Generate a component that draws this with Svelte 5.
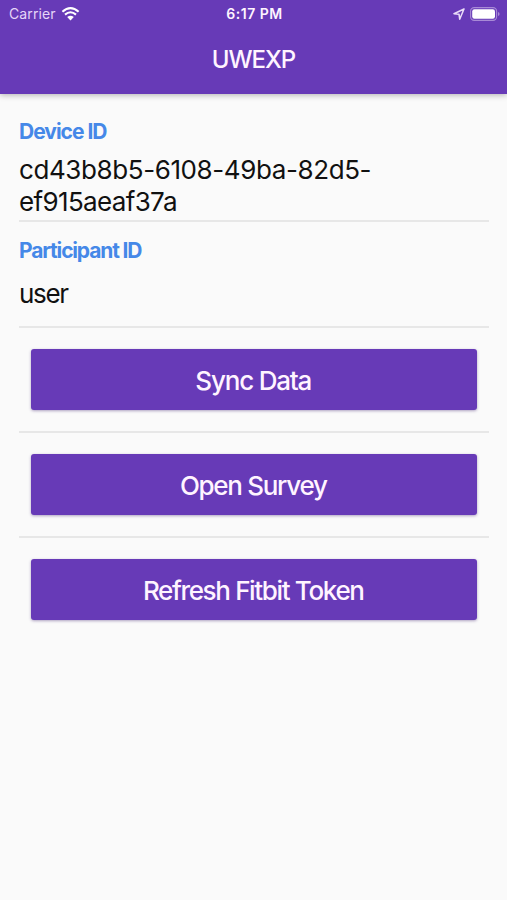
<script lang="ts">
	interface Field {
		id: string;
		label: string;
		lines: string[];
	}

	const fields: Field[] = [
		{ id: 'device', label: 'Device ID', lines: ['cd43b8b5-6108-49ba-82d5-', 'ef915aeaf37a'] },
		{ id: 'participant', label: 'Participant ID', lines: ['user'] }
	];

	const actions = [
		{ id: 'sync', label: 'Sync Data' },
		{ id: 'survey', label: 'Open Survey' },
		{ id: 'fitbit', label: 'Refresh Fitbit Token' }
	];
</script>

<div class="screen">
	<header class="app-bar">
		<div class="status-bar">
			<div class="status-left">
				<span class="carrier">Carrier</span>
				<svg class="wifi" viewBox="0 0 18 14" width="19" height="14" aria-hidden="true">
					<path d="M0.9 4.8 Q9 -2.4 17.1 4.8" />
					<path d="M3.5 7.6 Q9 2.9 14.5 7.6" />
					<path class="solid" d="M5.7 10.1 Q9 7.3 12.3 10.1 L9 13.6 Z" />
				</svg>
			</div>
			<span class="time">6:17 PM</span>
			<div class="status-right">
				<svg class="location" viewBox="0 0 12 12" width="12" height="12" aria-hidden="true">
					<path d="M11 1 L1 5.7 L6 6.2 L6.7 11.2 Z" />
				</svg>
				<svg class="battery" viewBox="0 0 30 14" width="30" height="14" aria-hidden="true">
					<rect class="shell" x="0.6" y="0.6" width="26" height="12.8" rx="3.6" />
					<rect class="charge" x="2.2" y="2.2" width="22.8" height="9.6" rx="2.2" />
					<path class="charge tip" d="M28 5 Q29.6 5.7 29.6 7 Q29.6 8.3 28 9 Z" />
				</svg>
			</div>
		</div>
		<h1>UWEXP</h1>
	</header>

	<main>
		{#each fields as field}
			<section class="field {field.id}">
				<h2>{field.label}</h2>
				<div class="value">
					{#each field.lines as line}
						<div>{line}</div>
					{/each}
				</div>
			</section>
		{/each}

		{#each actions as action}
			<div class="action">
				<button class={action.id} type="button">{action.label}</button>
			</div>
		{/each}
	</main>
</div>

<style>
	:global(body) {
		background: #fafafa;
	}

	.screen {
		min-height: 900px;
		background: #fafafa;
		color: #111;
		font-family: Inter, 'Liberation Sans', sans-serif;
	}

	.app-bar {
		height: 93.5px;
		background: #673ab7;
		color: #fff4ff;
		box-shadow: 0 1px 6px rgba(0, 0, 0, 0.3);
	}

	.status-bar {
		display: grid;
		grid-template-columns: 1fr auto 1fr;
		align-items: center;
		height: 27px;
		padding: 0 7px 0 9px;
	}

	.status-left,
	.status-right {
		display: flex;
		align-items: center;
	}

	.status-left {
		gap: 5px;
	}

	.status-right {
		justify-content: flex-end;
		gap: 5px;
	}

	.carrier {
		font-size: 14px;
		line-height: 27px;
		letter-spacing: 0.1px;
		color: #e6d5f8;
	}

	.time {
		font-size: 14px;
		font-weight: 600;
		line-height: 27px;
		letter-spacing: 0.5px;
	}

	.wifi path {
		fill: none;
		stroke: #fff;
		stroke-width: 2.1;
	}

	.wifi .solid {
		fill: #fff;
		stroke: none;
	}

	.location path {
		fill: none;
		stroke: #eadcf8;
		stroke-width: 1.5;
		stroke-linejoin: round;
	}

	.battery .shell {
		fill: none;
		stroke: #a88ad6;
		stroke-width: 1.1;
	}

	.battery .charge {
		fill: #fff;
	}

	.battery .tip {
		fill: #a88ad6;
	}

	h1 {
		margin: 0;
		padding-top: 17px;
		font-size: 24px;
		font-weight: 500;
		line-height: 32px;
		letter-spacing: -1px;
		text-align: center;
	}

	main {
		padding: 0 18px 0 19px;
	}

	.field {
		box-sizing: border-box;
		border-bottom: 2px solid #e7e7e7;
	}

	.device {
		height: 128.5px;
		padding-top: 25px;
	}

	.participant {
		height: 106px;
		padding-top: 16px;
	}

	h2 {
		margin: 0;
		font-size: 21px;
		font-weight: 650;
		line-height: 26px;
		letter-spacing: -1px;
		color: #4588e8;
	}

	.participant h2 {
		letter-spacing: -1.15px;
	}

	.value {
		padding-top: 9px;
		font-size: 26px;
		line-height: 32px;
		letter-spacing: -0.4px;
		white-space: nowrap;
	}

	.value div + div {
		letter-spacing: -0.65px;
	}

	.participant .value {
		padding-top: 14px;
		letter-spacing: -1.3px;
	}

	.action {
		box-sizing: border-box;
		height: 105.2px;
		padding: 21px 12px 0;
		border-bottom: 2px solid #e7e7e7;
	}

	.action:last-child {
		border-bottom: none;
	}

	button {
		display: block;
		width: 100%;
		height: 61px;
		padding: 2px 1.5px 0 0;
		border: none;
		border-radius: 3px;
		background: #673ab7;
		color: #fff4ff;
		font: 500 26px/59px Inter, 'Liberation Sans', sans-serif;
		letter-spacing: -1.2px;
		box-shadow: 0 1px 3px rgba(60, 30, 110, 0.4);
	}

	.survey {
		letter-spacing: -1.3px;
	}

	.fitbit {
		letter-spacing: -1.35px;
	}
</style>
